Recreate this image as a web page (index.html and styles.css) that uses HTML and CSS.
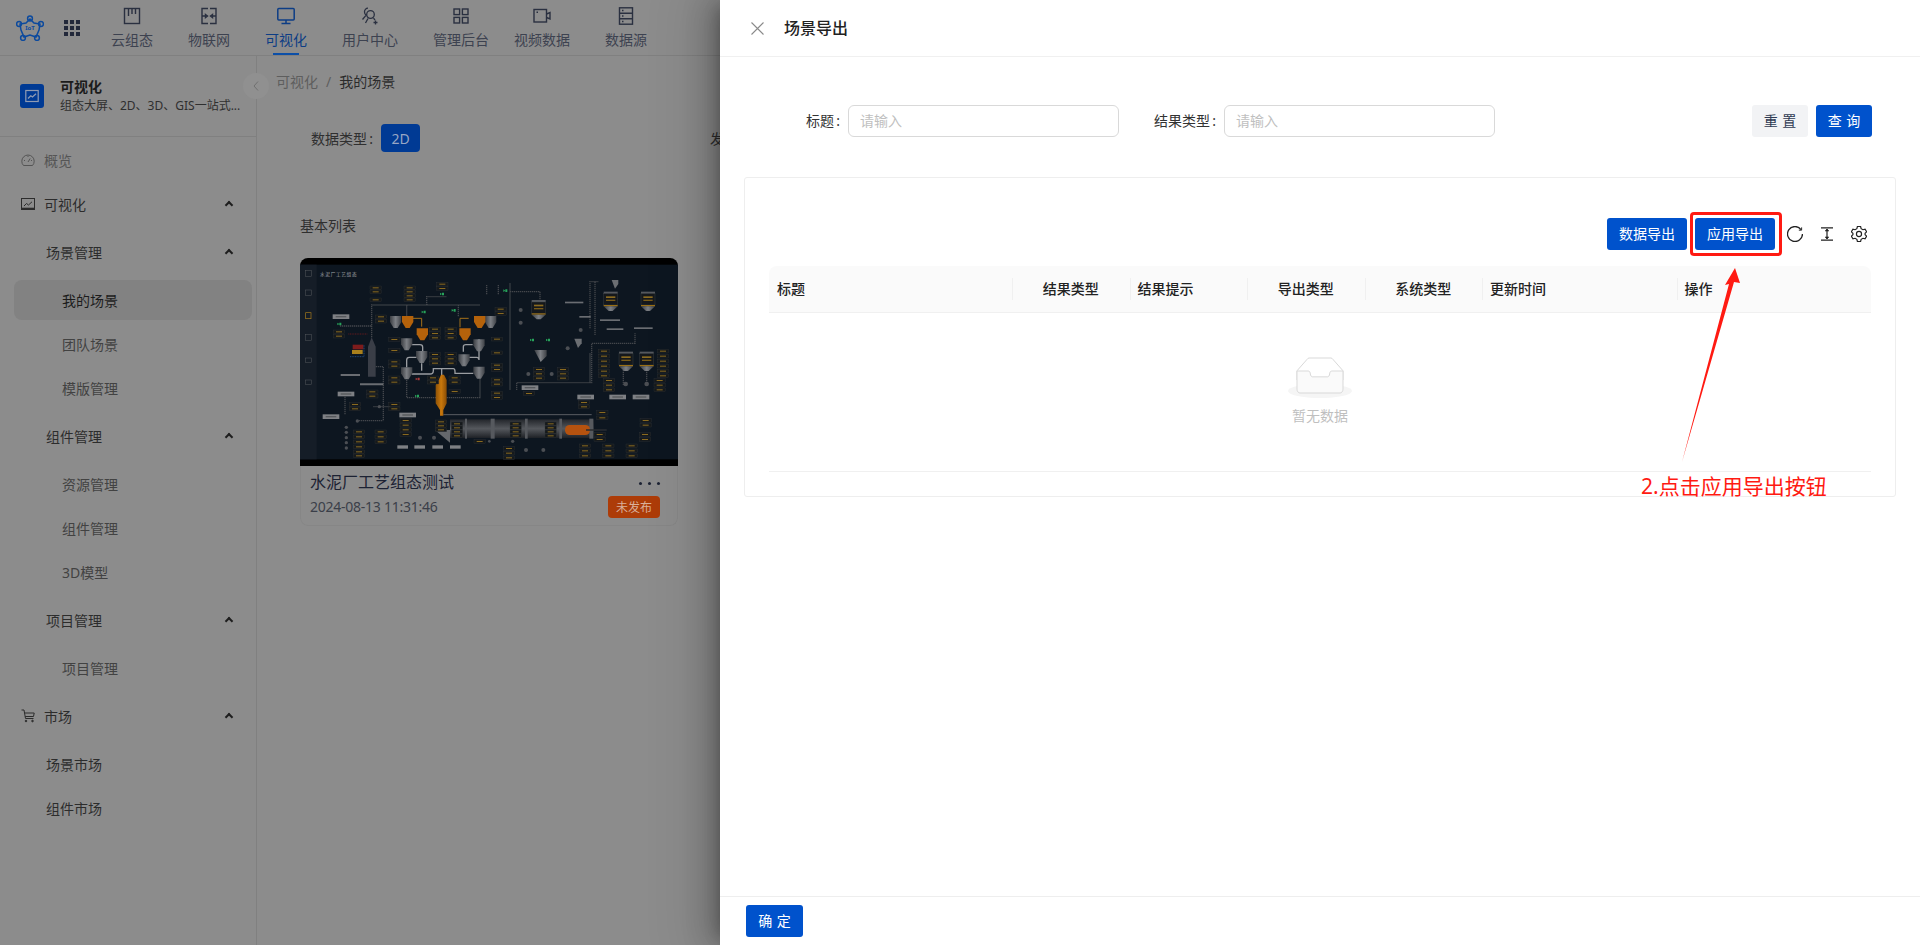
FILE: index.html
```html
<!DOCTYPE html>
<html lang="zh-CN">
<head>
  <meta charset="UTF-8" />
  <title>场景导出</title>
  <link rel="stylesheet" href="styles.css">
</head>
<body>
  <div class="page">
    <header class="topbar">
      <svg class="logo" viewBox="0 0 28 26" fill="none" stroke="#0c4a9e" stroke-width="1.5">
        <path d="M14 4 L18 8 L24 9 L23 15 L20 22 L14 20 L8 22 L5 15 L4 9 L10 8 Z"/>
        <circle cx="14" cy="3.5" r="2.4"/><circle cx="25" cy="9" r="2.4"/><circle cx="3" cy="9" r="2.4"/>
        <circle cx="21" cy="23" r="2.4"/><circle cx="7" cy="23" r="2.4"/>
        <text x="14" y="15" class="logo-text" text-anchor="middle">IoT</text>
      </svg>
      <div class="apps">
        <i></i><i></i><i></i><i></i><i></i><i></i><i></i><i></i><i></i>
      </div>
      <nav class="topnav">
        <a class="nav-item" href="#">
          <svg viewBox="0 0 18 18" fill="none" stroke="currentColor" stroke-width="1.4"><rect x="1.5" y="1.5" width="15" height="15"/><path d="M5.5 1.5V9M9 1.5V7M12.5 1.5V7"/></svg>
          云组态
        </a>
        <a class="nav-item" href="#">
          <svg viewBox="0 0 18 18" fill="none" stroke="currentColor" stroke-width="1.4"><path d="M8 1.5H2V16.5H8M10 1.5H16V16.5H10M2 9H6M16 9H12"/><path d="M5.5 7.5L7.5 9L5.5 10.5ZM12.5 7.5L10.5 9L12.5 10.5Z" fill="currentColor"/></svg>
          物联网
        </a>
        <a class="nav-item active" href="#">
          <svg viewBox="0 0 18 18" fill="none" stroke="currentColor" stroke-width="1.5"><rect x="0.8" y="1.5" width="16.4" height="11.5" rx="1"/><path d="M9 13V16.2M4.5 16.4H13.5"/></svg>
          可视化
        </a>
        <a class="nav-item" href="#">
          <svg viewBox="0 0 18 18" fill="none" stroke="currentColor" stroke-width="1.3"><circle cx="9.5" cy="7.5" r="3.8"/><path d="M7 1.2A3.5 3.5 0 0 0 3.5 5C3.5 6.5 4.3 7.5 5 8.3L1.5 12.5M7 11.5L4.5 16M12.5 11.2L14 13M14.5 13.5V17.5M12.5 15.5H16.5"/></svg>
          用户中心
        </a>
        <a class="nav-item wide" href="#">
          <svg viewBox="0 0 18 18" fill="none" stroke="currentColor" stroke-width="1.4"><rect x="2" y="2" width="5.6" height="5.6"/><rect x="10.4" y="2" width="5.6" height="5.6"/><rect x="2" y="10.4" width="5.6" height="5.6"/><rect x="10.4" y="10.4" width="5.6" height="5.6"/></svg>
          管理后台
        </a>
        <a class="nav-item" href="#">
          <svg viewBox="0 0 18 18" fill="none" stroke="currentColor" stroke-width="1.4"><rect x="1" y="2.5" width="12.5" height="12.5"/><path d="M13.5 7L17 5.5V12L13.5 10.5"/><path d="M3.5 5.2H5"/></svg>
          视频数据
        </a>
        <a class="nav-item" href="#">
          <svg viewBox="0 0 18 18" fill="none" stroke="currentColor" stroke-width="1.4"><rect x="2.5" y="0.8" width="13" height="16.4"/><path d="M2.5 6.3H15.5M2.5 11.8H15.5M5 3.5H6.5M5 9H6.5M5 14.5H6.5"/></svg>
          数据源
        </a>
      </nav>
    </header>

    <div class="layout">
      <aside class="sidebar">
        <div class="side-head">
          <span class="side-logo">
            <svg viewBox="0 0 14 14" fill="none" stroke="#8f9bb3" stroke-width="1.2"><rect x="0.8" y="1.5" width="12.4" height="11"/><path d="M3 9.5L5.8 6.8L7.5 8L11 4.8" stroke-width="1.3"/></svg>
          </span>
          <div class="side-title">
            <b>可视化</b>
            <small>组态大屏、2D、3D、GIS一站式...</small>
          </div>
        </div>
        <button class="collapse" type="button">
          <svg viewBox="0 0 8 12" fill="none" stroke="currentColor" stroke-width="1"><path d="M6 1.5L2 6L6 10.5"/></svg>
        </button>

        <ul class="menu">
          <li>
            <a class="row top dim" href="#">
              <svg viewBox="0 0 14 14" fill="none" stroke="currentColor" stroke-width="1"><path d="M2.5 12.5A6.2 6.2 0 1 1 11.5 12.5Z"/><path d="M7 9L9.2 5.5M3 7.5H4M10 7.5H11M7 3V4"/></svg>
              概览
            </a>
          </li>
          <li>
            <a class="row top" href="#">
              <svg viewBox="0 0 14 14" fill="none" stroke="currentColor" stroke-width="1"><rect x="0.5" y="1.5" width="13" height="11"/><path d="M3 9L5.5 6.5L7.5 8L11 4.8"/><path d="M0.5 11.5H13.5" stroke-width="1.6"/></svg>
              可视化
              <span class="up"></span>
            </a>
            <ul class="sub">
              <li>
                <a class="row group" href="#">场景管理<span class="up"></span></a>
                <ul class="sub leafs">
                  <li><a class="row leaf current" href="#">我的场景</a></li>
                  <li><a class="row leaf" href="#">团队场景</a></li>
                  <li><a class="row leaf" href="#">模版管理</a></li>
                </ul>
              </li>
              <li>
                <a class="row group" href="#">组件管理<span class="up"></span></a>
                <ul class="sub leafs">
                  <li><a class="row leaf" href="#">资源管理</a></li>
                  <li><a class="row leaf" href="#">组件管理</a></li>
                  <li><a class="row leaf" href="#">3D模型</a></li>
                </ul>
              </li>
              <li>
                <a class="row group" href="#">项目管理<span class="up"></span></a>
                <ul class="sub leafs">
                  <li><a class="row leaf" href="#">项目管理</a></li>
                </ul>
              </li>
            </ul>
          </li>
          <li>
            <a class="row top" href="#">
              <svg viewBox="0 0 14 14" fill="none" stroke="currentColor" stroke-width="1"><path d="M0.5 1H3L4.5 9.5H12.5M3.6 4H13.2L12.5 7.5H4.2"/><circle cx="5" cy="12" r="0.8" fill="currentColor"/><circle cx="11.5" cy="12" r="0.8" fill="currentColor"/></svg>
              市场
              <span class="up"></span>
            </a>
            <ul class="sub">
              <li><a class="row group" href="#">场景市场</a></li>
              <li><a class="row group" href="#">组件市场</a></li>
            </ul>
          </li>
        </ul>
      </aside>

      <main class="main">
        <div class="crumb"><span>可视化</span><em>/</em><b>我的场景</b></div>
        <div class="filter">
          <span>数据类型&thinsp;:</span>
          <span class="pill">2D</span>
          <span class="filter-next">发布状态&thinsp;:</span>
        </div>
        <h4 class="list-title">基本列表</h4>
        <article class="scene">
          <svg class="thumb" viewBox="30 24 1134 624">
            <defs>
              <linearGradient id="steel" x1="0" x2="1" y1="0" y2="0"><stop offset="0" stop-color="#3a3d42"/><stop offset=".5" stop-color="#7c7f84"/><stop offset="1" stop-color="#3e4146"/></linearGradient>
              <linearGradient id="fire" x1="0" x2="1" y1="0" y2="0"><stop offset="0" stop-color="#8e5206"/><stop offset=".5" stop-color="#c9780c"/><stop offset="1" stop-color="#8a4d05"/></linearGradient>
              <linearGradient id="kiln" x1="0" x2="0" y1="0" y2="1"><stop offset="0" stop-color="#23262b"/><stop offset=".5" stop-color="#55585d"/><stop offset="1" stop-color="#1e2126"/></linearGradient>
              <path id="hop" d="M0 0H34V18L23 36H11L0 18Z"/>
              <g id="lbl"><rect width="34" height="11" fill="#15191c" stroke="#33363a"/><rect x="8" y="4" width="18" height="3" fill="#8a6a20"/></g>
              <g id="tag"><rect width="50" height="14" fill="#7e8084"/><rect x="9" y="5" width="32" height="4" fill="#55585c"/></g>
              <g id="tank"><rect x="3" width="42" height="6" fill="#55585d"/><rect x="3" y="6" width="42" height="34" fill="#15181c" stroke="#4b4e52"/><rect x="10" y="14" width="28" height="5" fill="#8a6a20"/><rect x="10" y="24" width="28" height="4" fill="#7a5c18"/><rect x="3" y="40" width="42" height="4" fill="#9a6f14"/><path d="M3 44H45L30 58H18Z" fill="url(#steel)"/></g>
              <path id="valve" d="M0 0L6 4V0L12 0V8H6V4L0 8Z"/>
            </defs>
            <rect x="30" y="24" width="1134" height="624" fill="#000"/>
            <rect x="30" y="44" width="1134" height="584" fill="#0d1620"/>
            <rect x="30" y="44" width="50" height="584" fill="#151d27"/>
            <text x="90" y="77" class="plant-title">水泥厂工艺组态</text>
            <g fill="none" stroke="#55585d" stroke-width="1.5">
              <rect x="46" y="62" width="18" height="18"/><rect x="46" y="120" width="18" height="16"/><rect x="46" y="254" width="18" height="18"/><rect x="46" y="324" width="18" height="14"/><rect x="46" y="390" width="18" height="14"/>
            </g>
            <rect x="47" y="188" width="16" height="18" fill="none" stroke="#a87c1c" stroke-width="2"/>
            <g fill="none" stroke="#43464b" stroke-width="4" stroke-dasharray="4 2">
              <path d="M245 262V165H570M410 165V140H470M505 165V200M350 200V165M150 228H245"/>
              <path d="M245 350H280V510M350 390V443H570V385M660 100V420M660 125H750V150"/>
              <path d="M680 420V398H905V280H1035V250M900 235V95H925M915 95V255M165 440V495M590 105V135M625 105V135"/>
              <path d="M900 398V310M1000 405V360M1070 405V360M250 470H300M200 512H280"/>
            </g>
            <path d="M460 494H905" stroke="#5a5d62" stroke-width="3"/>
            <g fill="none" stroke="#9a9da1" stroke-width="4">
              <path d="M366 284H390Q398 284 398 292V306M350 352V330Q350 322 358 322H380M395 340V362M365 372H420Q430 372 430 362V356H490Q495 356 495 365V370H550"/>
              <path d="M567 268V330Q567 322 560 322H530V340M520 305V290Q520 284 528 284H548M455 355V375"/>
            </g>
            <g fill="none" stroke="#a3701a" stroke-width="3"><path d="M366 205H395V230M536 205H510V232"/></g>
            <g fill="url(#steel)">
              <use href="#hop" x="300" y="198"/><use href="#hop" x="585" y="198"/><use href="#hop" x="333" y="265"/><use href="#hop" x="550" y="268"/>
              <use href="#hop" x="378" y="303"/><use href="#hop" x="505" y="313"/><use href="#hop" x="333" y="352"/><use href="#hop" x="550" y="350"/>
            </g>
            <g fill="#b4620b">
              <use href="#hop" x="336" y="198"/><use href="#hop" x="552" y="198"/><use href="#hop" x="380" y="235"/><use href="#hop" x="508" y="235"/>
            </g>
            <path d="M446 390L453 374H462L470 390V460L460 480V497H450V480L437 460V405Z" fill="url(#fire)"/>
            <path d="M234 290L245 262L257 290V380H234Z" fill="#3a3e47"/>
            <path d="M210 400H280V406H210ZM152 372H210V378H152Z" fill="#6a6d72"/>
            <rect x="188" y="284" width="32" height="14" fill="#7e1c1c"/>
            <rect x="186" y="300" width="32" height="12" fill="#a9801c"/>
            <path d="M180 320H222V285" fill="none" stroke="#2a62a6" stroke-width="2" stroke-dasharray="3 2"/>
            <path d="M175 252H232" fill="none" stroke="#8e1d1d" stroke-width="2" stroke-dasharray="3 2"/>
            <rect x="480" y="508" width="430" height="56" fill="url(#kiln)"/>
            <g fill="#56595e"><rect x="525" y="506" width="6" height="60"/><rect x="602" y="506" width="12" height="60"/><rect x="705" y="506" width="8" height="60"/><rect x="808" y="506" width="8" height="60"/><rect x="898" y="506" width="12" height="60"/></g>
            <rect x="825" y="525" width="75" height="30" rx="14" fill="#b5520f"/>
            <path d="M888 540H950" stroke="#2a2d31" stroke-width="4"/>
            <path d="M435 540H480V578Z" fill="#65686c"/>
            <use href="#tank" x="722" y="150"/>
            <path d="M733 300H770V318L752 336Z" fill="url(#steel)"/>
            <use href="#tank" x="938" y="125"/><use href="#tank" x="1050" y="125"/>
            <use href="#tank" x="984" y="305"/><use href="#tank" x="1046" y="305"/>
            <path d="M965 90H985V102L975 116Z" fill="#6b6e72"/>
            <path d="M853 266H875V280L864 294Z" fill="#6b6e72"/>
            <g fill="#6a6d72"><rect x="825" y="155" width="55" height="5"/><rect x="868" y="198" width="34" height="5"/><rect x="930" y="208" width="60" height="5"/><rect x="950" y="235" width="50" height="5"/><rect x="1032" y="232" width="56" height="5"/></g>
            <g fill="#27a35a">
              <use href="#valve" x="450" y="128"/><use href="#valve" x="395" y="182"/><use href="#valve" x="485" y="177"/><use href="#valve" x="720" y="266"/><use href="#valve" x="768" y="266"/><use href="#valve" x="375" y="434"/><use href="#valve" x="142" y="218"/><use href="#valve" x="640" y="118"/>
            </g>
            <use href="#valve" x="377" y="383" fill="#a83a3a"/>
            <g fill="#7e8084">
              <use href="#tag" x="128" y="193"/><use href="#tag" x="143" y="425"/><use href="#tag" x="98" y="493"/><use href="#tag" x="328" y="488"/><use href="#tag" x="695" y="406"/><use href="#tag" x="862" y="434"/><use href="#tag" x="958" y="434"/><use href="#tag" x="1028" y="434"/>
              <rect x="322" y="586" width="32" height="10"/><rect x="373" y="586" width="32" height="10"/><rect x="427" y="586" width="32" height="10"/><rect x="480" y="586" width="32" height="10"/>
            </g>
            <g>
              <use href="#lbl" x="240" y="108"/><use href="#lbl" x="240" y="120"/><use href="#lbl" x="240" y="144"/><use href="#lbl" x="342" y="108"/><use href="#lbl" x="342" y="120"/><use href="#lbl" x="342" y="132"/><use href="#lbl" x="342" y="144"/>
              <use href="#lbl" x="440" y="97"/><use href="#lbl" x="440" y="110"/><use href="#lbl" x="256" y="195"/><use href="#lbl" x="256" y="208"/><use href="#lbl" x="130" y="240"/><use href="#lbl" x="130" y="253"/>
              <use href="#lbl" x="296" y="263"/><use href="#lbl" x="296" y="296"/><use href="#lbl" x="296" y="330"/><use href="#lbl" x="296" y="343"/><use href="#lbl" x="296" y="378"/><use href="#lbl" x="296" y="391"/><use href="#lbl" x="296" y="458"/><use href="#lbl" x="296" y="471"/>
              <use href="#lbl" x="418" y="232"/><use href="#lbl" x="418" y="245"/><use href="#lbl" x="418" y="258"/><use href="#lbl" x="465" y="232"/><use href="#lbl" x="465" y="245"/><use href="#lbl" x="465" y="258"/>
              <use href="#lbl" x="418" y="308"/><use href="#lbl" x="418" y="321"/><use href="#lbl" x="418" y="334"/><use href="#lbl" x="465" y="308"/><use href="#lbl" x="465" y="321"/><use href="#lbl" x="465" y="334"/>
              <use href="#lbl" x="412" y="378"/><use href="#lbl" x="412" y="391"/><use href="#lbl" x="477" y="378"/><use href="#lbl" x="477" y="391"/><use href="#lbl" x="477" y="419"/>
              <use href="#lbl" x="604" y="262"/><use href="#lbl" x="604" y="303"/><use href="#lbl" x="604" y="340"/><use href="#lbl" x="604" y="353"/><use href="#lbl" x="604" y="384"/><use href="#lbl" x="604" y="397"/><use href="#lbl" x="604" y="424"/><use href="#lbl" x="604" y="437"/>
              <use href="#lbl" x="615" y="172"/><use href="#lbl" x="615" y="185"/><use href="#lbl" x="230" y="420"/><use href="#lbl" x="230" y="433"/><use href="#lbl" x="178" y="458"/><use href="#lbl" x="178" y="471"/>
              <use href="#lbl" x="730" y="353"/><use href="#lbl" x="730" y="366"/><use href="#lbl" x="730" y="379"/><use href="#lbl" x="802" y="353"/><use href="#lbl" x="802" y="366"/><use href="#lbl" x="802" y="379"/>
              <use href="#lbl" x="925" y="298"/><use href="#lbl" x="925" y="313"/><use href="#lbl" x="925" y="328"/><use href="#lbl" x="925" y="343"/><use href="#lbl" x="925" y="358"/><use href="#lbl" x="925" y="372"/>
              <use href="#lbl" x="1102" y="298"/><use href="#lbl" x="1102" y="313"/><use href="#lbl" x="1102" y="328"/><use href="#lbl" x="1102" y="343"/><use href="#lbl" x="1102" y="358"/><use href="#lbl" x="1102" y="372"/>
              <use href="#lbl" x="940" y="386"/><use href="#lbl" x="940" y="400"/><use href="#lbl" x="940" y="414"/><use href="#lbl" x="1092" y="386"/><use href="#lbl" x="1092" y="400"/><use href="#lbl" x="1092" y="414"/>
              <use href="#lbl" x="330" y="506"/><use href="#lbl" x="330" y="520"/><use href="#lbl" x="330" y="534"/><use href="#lbl" x="330" y="548"/>
              <use href="#lbl" x="190" y="540"/><use href="#lbl" x="190" y="555"/><use href="#lbl" x="190" y="570"/><use href="#lbl" x="190" y="585"/><use href="#lbl" x="190" y="600"/><use href="#lbl" x="190" y="612"/><use href="#lbl" x="255" y="540"/><use href="#lbl" x="255" y="555"/><use href="#lbl" x="255" y="570"/>
              <use href="#lbl" x="436" y="510"/><use href="#lbl" x="436" y="522"/><use href="#lbl" x="436" y="534"/><use href="#lbl" x="484" y="516"/><use href="#lbl" x="484" y="528"/><use href="#lbl" x="484" y="540"/><use href="#lbl" x="484" y="552"/>
              <use href="#lbl" x="660" y="516"/><use href="#lbl" x="660" y="528"/><use href="#lbl" x="660" y="540"/><use href="#lbl" x="660" y="552"/><use href="#lbl" x="765" y="516"/><use href="#lbl" x="765" y="528"/><use href="#lbl" x="765" y="540"/><use href="#lbl" x="765" y="552"/>
              <use href="#lbl" x="552" y="569"/><use href="#lbl" x="640" y="590"/><use href="#lbl" x="640" y="604"/><use href="#lbl" x="640" y="618"/>
              <use href="#lbl" x="920" y="482"/><use href="#lbl" x="920" y="498"/><use href="#lbl" x="1050" y="506"/><use href="#lbl" x="1050" y="520"/><use href="#lbl" x="1048" y="548"/><use href="#lbl" x="1048" y="563"/>
              <use href="#lbl" x="912" y="548"/><use href="#lbl" x="912" y="563"/><use href="#lbl" x="868" y="582"/><use href="#lbl" x="868" y="597"/><use href="#lbl" x="868" y="612"/><use href="#lbl" x="938" y="582"/><use href="#lbl" x="938" y="597"/><use href="#lbl" x="938" y="612"/><use href="#lbl" x="1008" y="582"/><use href="#lbl" x="1008" y="597"/><use href="#lbl" x="1008" y="612"/>
              <use href="#lbl" x="865" y="452"/><use href="#lbl" x="865" y="465"/><use href="#lbl" x="700" y="425"/>
            </g>
            <g fill="#4b4e53">
              <circle cx="692" cy="180" r="6"/><circle cx="692" cy="218" r="6"/><circle cx="833" cy="295" r="6"/><circle cx="872" cy="240" r="6"/><circle cx="715" cy="372" r="6"/><circle cx="785" cy="372" r="6"/><circle cx="390" cy="563" r="6"/><circle cx="432" cy="563" r="6"/><circle cx="708" cy="600" r="6"/><circle cx="760" cy="600" r="6"/><circle cx="1007" cy="402" r="7"/><circle cx="1070" cy="402" r="7"/>
              <circle cx="169" cy="532" r="5"/><circle cx="169" cy="547" r="5"/><circle cx="169" cy="563" r="5"/><circle cx="169" cy="578" r="5"/><circle cx="169" cy="594" r="5"/><circle cx="268" cy="470" r="5"/><circle cx="202" cy="513" r="5"/><circle cx="598" cy="574" r="4"/><circle cx="668" cy="574" r="5"/>
            </g>
          </svg>
          <div class="scene-body">
            <div class="scene-line">
              <h3>水泥厂工艺组态测试</h3>
              <span class="dots"><i></i><i></i><i></i></span>
            </div>
            <div class="scene-line">
              <time>2024-08-13 11:31:46</time>
              <span class="tag">未发布</span>
            </div>
          </div>
        </article>
      </main>
    </div>

    <section class="drawer">
      <header class="drawer-head">
        <svg class="close" viewBox="0 0 13 13" fill="none" stroke="#8a8a8a" stroke-width="1.1"><path d="M0.5 0.5L12.5 12.5M12.5 0.5L0.5 12.5"/></svg>
        <h2>场景导出</h2>
      </header>

      <div class="drawer-body">
        <form class="search">
          <label class="field"><span>标题&thinsp;:</span><input type="text" placeholder="请输入" /></label>
          <label class="field"><span>结果类型&thinsp;:</span><input type="text" placeholder="请输入" /></label>
          <div class="search-btns">
            <button class="btn plain" type="button">重 置</button>
            <button class="btn primary" type="button">查 询</button>
          </div>
        </form>

        <div class="panel">
          <div class="toolbar">
            <button class="btn primary" type="button">数据导出</button>
            <button class="btn primary" type="button">应用导出</button>
            <svg class="tool first" viewBox="0.5 0.5 15 15" fill="none" stroke="#222" stroke-width="1.2"><path d="M13.6 3.8A7 7 0 1 0 15 8"/><path d="M14.2 1.8V4.4H11.6" stroke-width="0.9"/></svg>
            <svg class="tool" viewBox="0 0 16 16" fill="none" stroke="#222" stroke-width="1.2"><path d="M2 1.8H14M2 14.2H14M8 3V13"/><path d="M6.2 5L8 3L9.8 5ZM6.2 11L8 13L9.8 11Z" fill="#222" stroke-width="0.6"/></svg>
            <svg class="tool" viewBox="0.5 0.5 15 15" fill="none" stroke="#222" stroke-width="1.1"><path d="M6.5 1H9.5L10 3L11.7 4L13.7 3.4L15.2 6L13.7 7.4V8.6L15.2 10L13.7 12.6L11.7 12L10 13L9.5 15H6.5L6 13L4.3 12L2.3 12.6L0.8 10L2.3 8.6V7.4L0.8 6L2.3 3.4L4.3 4L6 3Z"/><circle cx="8" cy="8" r="2.4"/></svg>
          </div>

          <table class="grid">
            <colgroup>
              <col class="c-title"><col class="c-mid"><col class="c-mid"><col class="c-mid"><col class="c-mid"><col class="c-wide"><col class="c-wide">
            </colgroup>
            <thead>
              <tr>
                <th>标题</th>
                <th class="mid">结果类型</th>
                <th>结果提示</th>
                <th class="mid">导出类型</th>
                <th class="mid">系统类型</th>
                <th>更新时间</th>
                <th>操作</th>
              </tr>
            </thead>
          </table>
          <div class="empty">
            <svg width="64" height="41" viewBox="0 0 64 41"><g transform="translate(0 1)" fill="none" fill-rule="evenodd"><ellipse fill="#f5f5f5" cx="32" cy="33" rx="32" ry="7"/><g fill-rule="nonzero" stroke="#d9d9d9"><path d="M55 12.76L44.854 1.258C44.367.474 43.656 0 42.907 0H21.093c-.749 0-1.46.474-1.947 1.257L9 12.761V22h46v-9.24z"/><path d="M41.613 15.931c0-1.605.994-2.93 2.227-2.931H55v18.137C55 33.26 53.68 35 52.05 35h-40.1C10.32 35 9 33.259 9 31.137V13h11.16c1.233 0 2.227 1.323 2.227 2.928v.022c0 1.605 1.005 2.901 2.237 2.901h14.752c1.232 0 2.237-1.308 2.237-2.913v-.007z" fill="#fafafa"/></g></g></svg>
            <p>暂无数据</p>
          </div>
        </div>
      </div>

      <footer class="drawer-foot">
        <button class="btn primary" type="button">确 定</button>
      </footer>

      <!-- annotation drawn on top of the screenshot -->
      <div class="mark-box"></div>
      <svg class="mark-arrow" viewBox="0 0 70 200"><polygon points="2,196 49,18 45,19 55,2 60,17 54,16" fill="#ff1a12"/></svg>
      <span class="mark-text">2.点击应用导出按钮</span>
    </section>
  </div>
</body>
</html>
```

FILE: styles.css
```css
:root {
  --blue: #0052cc;
  --blue-dim: #003a94;
  --ink: #222222;
  --ink-dim: #2c2c2c;
  --page: #8c8c8c;
  --line-dim: #808080;
}

* {
  box-sizing: border-box;
}

html, body {
  height: 100%;
}

body {
  margin: 0;
  font-family: "Noto Sans", "Noto Sans CJK SC", sans-serif;
  font-size: 14px;
  color: var(--ink);
  background: var(--page);
  overflow: hidden;
}

a {
  color: inherit;
  text-decoration: none;
}

ul {
  list-style: none;
  margin: 0;
  padding: 0;
}

.page {
  position: relative;
  height: 945px;
  overflow: hidden;
}

/* top bar */
.topbar {
  display: flex;
  height: 56px;
  border-bottom: 1px solid var(--line-dim);
}

.logo {
  width: 28px;
  height: 26px;
  margin: 15px 0 0 16px;
}

.logo-text {
  font-size: 6px;
  font-weight: 700;
  fill: #0c4a9e;
  stroke: none;
}

.apps {
  display: grid;
  grid-template-columns: repeat(3, 4px);
  grid-auto-rows: 4px;
  gap: 2px;
  margin: 20px 0 0 20px;
}

.apps i {
  background: #22283a;
}

.topnav {
  display: flex;
  gap: 35px;
  margin-left: 31px;
}

.nav-item {
  position: relative;
  display: flex;
  flex-direction: column;
  align-items: center;
  height: 55px;
  padding-top: 7px;
  line-height: 20px;
  color: #3d4250;
}

.nav-item svg {
  width: 18px;
  height: 18px;
  margin-bottom: 5px;
  color: #2a3040;
}

.nav-item.wide {
  margin-right: -10px;
}

.nav-item.active,
.nav-item.active svg {
  color: #0d3d85;
}

.nav-item.active::after {
  content: "";
  position: absolute;
  left: 8px;
  right: 8px;
  bottom: 0;
  height: 2px;
  background: #0c4fa8;
}

/* sidebar */
.layout {
  display: flex;
  height: 889px;
}

.sidebar {
  position: relative;
  width: 257px;
  flex: none;
  border-right: 1px solid var(--line-dim);
}

.side-head {
  display: flex;
  align-items: center;
  gap: 16px;
  height: 81px;
  padding: 0 20px;
  border-bottom: 1px solid var(--line-dim);
}

.side-logo {
  display: flex;
  align-items: center;
  justify-content: center;
  width: 24px;
  height: 24px;
  border-radius: 3px;
  background: var(--blue-dim);
}

.side-logo svg {
  width: 14px;
  height: 14px;
}

.side-title {
  display: flex;
  flex-direction: column;
  width: 176px;
}

.side-title b {
  line-height: 20px;
  color: #1b1b1b;
}

.side-title small {
  font-size: 12px;
  line-height: 18px;
  color: #2f2f2f;
  white-space: nowrap;
}

.collapse {
  position: absolute;
  top: 17px;
  right: -13px;
  z-index: 2;
  width: 26px;
  height: 26px;
  padding: 0;
  border: 0;
  border-radius: 50%;
  background: #909090;
  color: #707070;
}

.collapse svg {
  display: block;
  width: 8px;
  height: 12px;
  margin: auto;
}

.menu {
  display: flex;
  flex-direction: column;
  gap: 4px;
  padding-top: 3px;
}

.sub {
  display: flex;
  flex-direction: column;
  gap: 4px;
  margin-top: 8px;
}

.sub.leafs {
  padding-bottom: 4px;
}

.row {
  position: relative;
  display: flex;
  align-items: center;
  height: 40px;
  margin: 0 4px 0 14px;
  border-radius: 8px;
  color: #2c2c2c;
}

.row svg {
  width: 14px;
  height: 14px;
  flex: none;
}

.row.top {
  gap: 9px;
  margin-left: 0;
  padding-left: 21px;
}

.row.top.dim {
  color: #555555;
}

.row.group {
  padding-left: 32px;
}

.row.leaf {
  padding-left: 48px;
  color: #424242;
}

.row.current {
  background: #828282;
  color: #1c1c1c;
}

.up {
  position: absolute;
  right: 20px;
  top: 18px;
  width: 6px;
  height: 6px;
  border-top: 2px solid #1e1e1e;
  border-left: 2px solid #1e1e1e;
  transform: rotate(45deg);
}

/* list page behind the drawer */
.main {
  flex: 1;
  min-width: 0;
}

.crumb {
  display: flex;
  gap: 8px;
  padding: 15px 0 0 19px;
  line-height: 22px;
  font-size: 14px;
  color: #5e5e5e;
}

.crumb em {
  font-style: normal;
}

.crumb b {
  font-weight: 400;
  color: #2b2b2b;
}

.filter {
  display: flex;
  align-items: center;
  gap: 8px;
  margin: 31px 0 0 54px;
  height: 28px;
  color: #2f2f2f;
  white-space: nowrap;
}

.pill {
  display: flex;
  align-items: center;
  justify-content: center;
  width: 39px;
  height: 28px;
  border-radius: 4px;
  background: var(--blue-dim);
  color: #97a6c4;
}

.filter-next {
  margin-left: 282px;
}

.list-title {
  margin: 63px 0 0 43px;
  font-size: 14px;
  font-weight: 400;
  line-height: 22px;
  color: #2f2f2f;
}

.scene {
  width: 378px;
  margin: 21px 0 0 43px;
  border-radius: 8px;
  overflow: hidden;
}

.thumb {
  display: block;
  width: 378px;
  height: 208px;
}

.scene-body {
  height: 60px;
  padding: 4px 17px 0 9px;
  border: 1px solid #868686;
  border-top: 0;
  border-radius: 0 0 8px 8px;
}

.scene-line {
  display: flex;
  align-items: center;
  justify-content: space-between;
}

.scene-line + .scene-line {
  margin-top: 2px;
}

.scene-line h3 {
  margin: 0;
  font-size: 16px;
  font-weight: 400;
  line-height: 24px;
  color: #1c2233;
}

.scene-line time {
  line-height: 22px;
  letter-spacing: -.25px;
  color: #3b3f49;
}

.dots {
  display: flex;
  gap: 6px;
  margin-top: 2px;
}

.dots i {
  width: 3px;
  height: 3px;
  border-radius: 50%;
  background: #1c2233;
}

.tag {
  display: flex;
  align-items: center;
  justify-content: center;
  width: 52px;
  height: 22px;
  border-radius: 4px;
  font-size: 12px;
  background: #ad3c08;
  color: #d9b09a;
}

/* drawer */
.drawer {
  position: absolute;
  top: 0;
  right: 0;
  bottom: 0;
  z-index: 5;
  display: flex;
  flex-direction: column;
  width: 1200px;
  background: #fff;
  box-shadow: -6px 0 16px -8px rgba(0, 0, 0, .32), -9px 0 28px 0 rgba(0, 0, 0, .2), -12px 0 48px 16px rgba(0, 0, 0, .1);
}

.drawer-head {
  display: flex;
  align-items: center;
  height: 57px;
  padding-left: 31px;
  border-bottom: 1px solid #f0f0f0;
}

.close {
  width: 13px;
  height: 13px;
  margin-right: 20px;
}

.drawer-head h2 {
  margin: 0;
  font-size: 16px;
  font-weight: 500;
  line-height: 24px;
  color: #222;
}

.drawer-body {
  flex: 1;
  padding: 48px 24px 0;
}

.search {
  display: grid;
  grid-template-columns: 376px 376px 1fr;
  padding-right: 24px;
}

.field {
  display: flex;
  align-items: center;
  gap: 8px;
  color: #333;
}

.field span {
  width: 96px;
  padding-bottom: 2px;
  text-align: right;
}

.field input {
  width: 271px;
  height: 32px;
  padding: 0 11px 2px;
  border: 1px solid #d9d9d9;
  border-radius: 6px;
  font: inherit;
  outline: none;
}

.field input::placeholder {
  color: #bfbfbf;
}

.search-btns {
  display: flex;
  justify-content: flex-end;
  gap: 8px;
}

.btn {
  height: 32px;
  padding: 0 12px 2px;
  border: 0;
  border-radius: 3px;
  font: inherit;
  word-spacing: 1px;
  cursor: pointer;
}

.btn.primary {
  background: var(--blue);
  color: #fff;
}

.btn.plain {
  background: #f2f3f5;
  color: #2f3a52;
}

.search-btns .btn {
  width: 56px;
  padding: 0 0 2px;
}

.panel {
  height: 320px;
  margin-top: 40px;
  padding: 40px 24px 0;
  border: 1px solid #eeeeee;
  border-radius: 3px;
}

.toolbar {
  display: flex;
  justify-content: flex-end;
  align-items: center;
  gap: 8px;
  padding-right: 4px;
}

.tool {
  width: 16px;
  height: 16px;
  margin-left: 8px;
}

.tool.first {
  margin-left: 4px;
}

.grid {
  width: 100%;
  margin-top: 16px;
  border-collapse: separate;
  border-spacing: 0;
  table-layout: fixed;
}

.c-title { width: 243px; }
.c-mid { width: 117.5px; }
.c-wide { width: 194.5px; }

.grid th {
  position: relative;
  height: 47px;
  padding: 0 8px 2px;
  border-bottom: 1px solid #f0f0f0;
  background: #fafafa;
  font-weight: 500;
  text-align: left;
  color: #222;
}

.grid th.mid {
  text-align: center;
}

.grid th:first-child {
  border-top-left-radius: 8px;
}

.grid th:last-child {
  border-top-right-radius: 8px;
}

.grid th + th::before {
  content: "";
  position: absolute;
  left: 0;
  top: 12px;
  height: 22px;
  width: 1px;
  background: #f0f0f0;
}

.empty {
  display: flex;
  flex-direction: column;
  align-items: center;
  height: 159px;
  padding-top: 44px;
  border-bottom: 1px solid #f0f0f0;
}

.empty p {
  margin: 7px 0 0;
  line-height: 22px;
  color: #bfbfbf;
}

.drawer-foot {
  height: 49px;
  padding: 8px 0 0 26px;
  border-top: 1px solid #eeeeee;
}

.drawer-foot .btn {
  width: 57px;
  padding: 0 0 2px;
}

/* red annotation */
.mark-box {
  position: absolute;
  left: 970px;
  top: 212px;
  width: 92px;
  height: 44px;
  border: 3px solid #ff1a12;
  border-radius: 4px;
}

.mark-arrow {
  position: absolute;
  left: 960px;
  top: 266px;
  width: 70px;
  height: 200px;
}

.mark-text {
  position: absolute;
  left: 921px;
  top: 471px;
  font-size: 21px;
  line-height: 30px;
  color: #ff1a12;
  white-space: nowrap;
}

.plant-title {
  font-size: 14px;
  letter-spacing: 2px;
  fill: #a6a9ad;
}
```
